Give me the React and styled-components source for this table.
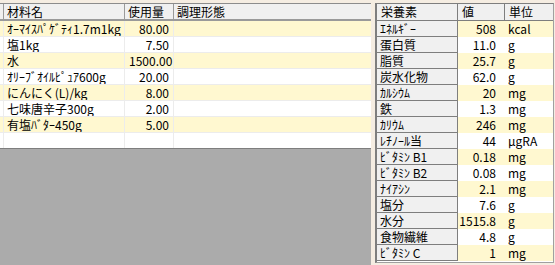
import React from 'react';
import styled, { createGlobalStyle } from 'styled-components';

const GlobalStyle = createGlobalStyle`
  html, body {
    margin: 0;
    padding: 0;
    background: #f5ede2;
  }
  body {
    font-family: 'Noto Sans CJK JP', 'DejaVu Sans', sans-serif;
    font-size: 12px;
    color: #000;
  }
`;

const Screen = styled.div`
  width: 555px;
  height: 265px;
  display: flex;
  gap: 4px;
  overflow: hidden;
`;

const RecipePanel = styled.div`
  width: 371px;
  height: 262px;
  margin-top: 3px;
  border-top: 1px solid #8c8c8c;
  background: #ababab;
  display: flex;
  flex-direction: column;
`;

const RecipeRow = styled.div`
  display: grid;
  grid-template-columns: 4px 121px 49px 1fr;
  height: ${p => (p.$head ? 15 : 15)}px;
  background: ${p => (p.$head ? '#f0f0f0' : p.$odd ? '#fff8d0' : '#ffffff')};
  border-bottom: ${p => (p.$head ? '2px solid #9a9a9a' : p.$last ? '1px solid #7e7e7e' : '1px solid #ececec')};
  line-height: 15px;
`;

const RecipeCell = styled.div`
  padding: 0 ${p => (p.$num ? '4px' : '3px')};
  text-align: ${p => (p.$num ? 'right' : 'left')};
  border-right: 1px solid ${p => (p.$head ? '#9a9a9a' : '#ececec')};
  white-space: nowrap;
  overflow: hidden;
  &:last-child {
    border-right: none;
  }
`;

const Gutter = styled.div`
  border-right: 1px solid ${p => (p.$head ? '#9a9a9a' : '#ececec')};
`;

const NutritionPanel = styled.div`
  width: 176px;
  height: 258px;
  margin-top: 3px;
  border-top: 1px solid #7e7e7e;
  border-left: 2px solid #7e7e7e;
  border-right: 1px solid #a0a0a0;
  border-bottom: 1px solid #a0a0a0;
  background: #ffffff;
  display: flex;
  flex-direction: column;
`;

const NutritionRow = styled.div`
  display: grid;
  grid-template-columns: 81px 47px 1fr;
  height: 16px;
  line-height: 15px;
  background: ${p => (p.$odd ? '#fff8d0' : '#ffffff')};
`;

const NutritionHead = styled(NutritionRow)`
  height: 17px;
  background: #f0f0f0;
  border-bottom: 1px solid #7e7e7e;
  box-sizing: border-box;
`;

const HeadCell = styled.div`
  padding-left: 4px;
  border-right: 1px solid #7e7e7e;
  &:last-child {
    border-right: none;
  }
`;

const NameCell = styled.div`
  padding-left: 3px;
  background: #f0f0f0;
  border-right: 1px solid #7e7e7e;
  border-bottom: 1px solid #7e7e7e;
  white-space: nowrap;
  overflow: hidden;
`;

const ValueCell = styled.div`
  text-align: right;
  padding-right: 9px;
`;

const UnitCell = styled.div`
  padding-left: 3px;
`;

const ingredients = [
  ['ｵｰﾏｲｽﾊﾟｹﾞﾃｨ1.7m1kg', '80.00'],
  ['塩1kg', '7.50'],
  ['水', '1500.00'],
  ['ｵﾘｰﾌﾞｵｲﾙﾋﾟｭｱ600g', '20.00'],
  ['にんにく(L)/kg', '8.00'],
  ['七味唐辛子300g', '2.00'],
  ['有塩ﾊﾞﾀｰ450g', '5.00'],
  ['', ''],
];

const nutrients = [
  ['ｴﾈﾙｷﾞｰ', '508', 'kcal'],
  ['蛋白質', '11.0', 'g'],
  ['脂質', '25.7', 'g'],
  ['炭水化物', '62.0', 'g'],
  ['ｶﾙｼｳﾑ', '20', 'mg'],
  ['鉄', '1.3', 'mg'],
  ['ｶﾘｳﾑ', '246', 'mg'],
  ['ﾚﾁﾉｰﾙ当', '44', 'μgRA'],
  ['ﾋﾞﾀﾐﾝ B1', '0.18', 'mg'],
  ['ﾋﾞﾀﾐﾝ B2', '0.08', 'mg'],
  ['ﾅｲｱｼﾝ', '2.1', 'mg'],
  ['塩分', '7.6', 'g'],
  ['水分', '1515.8', 'g'],
  ['食物繊維', '4.8', 'g'],
  ['ﾋﾞﾀﾐﾝ C', '1', 'mg'],
];

const App = () => (
  <>
    <GlobalStyle />
    <Screen>
      <RecipePanel>
        <RecipeRow $head>
          <Gutter $head />
          <RecipeCell $head>材料名</RecipeCell>
          <RecipeCell $head>使用量</RecipeCell>
          <RecipeCell $head>調理形態</RecipeCell>
        </RecipeRow>
        {ingredients.map(([name, amount], i) => (
          <RecipeRow key={i} $odd={i % 2 === 0} $last={i === ingredients.length - 1}>
            <Gutter />
            <RecipeCell>{name}</RecipeCell>
            <RecipeCell $num>{amount}</RecipeCell>
            <RecipeCell />
          </RecipeRow>
        ))}
      </RecipePanel>
      <NutritionPanel>
        <NutritionHead>
          <HeadCell>栄養素</HeadCell>
          <HeadCell>値</HeadCell>
          <HeadCell>単位</HeadCell>
        </NutritionHead>
        {nutrients.map(([name, value, unit], i) => (
          <NutritionRow key={name} $odd={i % 2 === 0}>
            <NameCell>{name}</NameCell>
            <ValueCell>{value}</ValueCell>
            <UnitCell>{unit}</UnitCell>
          </NutritionRow>
        ))}
      </NutritionPanel>
    </Screen>
  </>
);

export default App;
